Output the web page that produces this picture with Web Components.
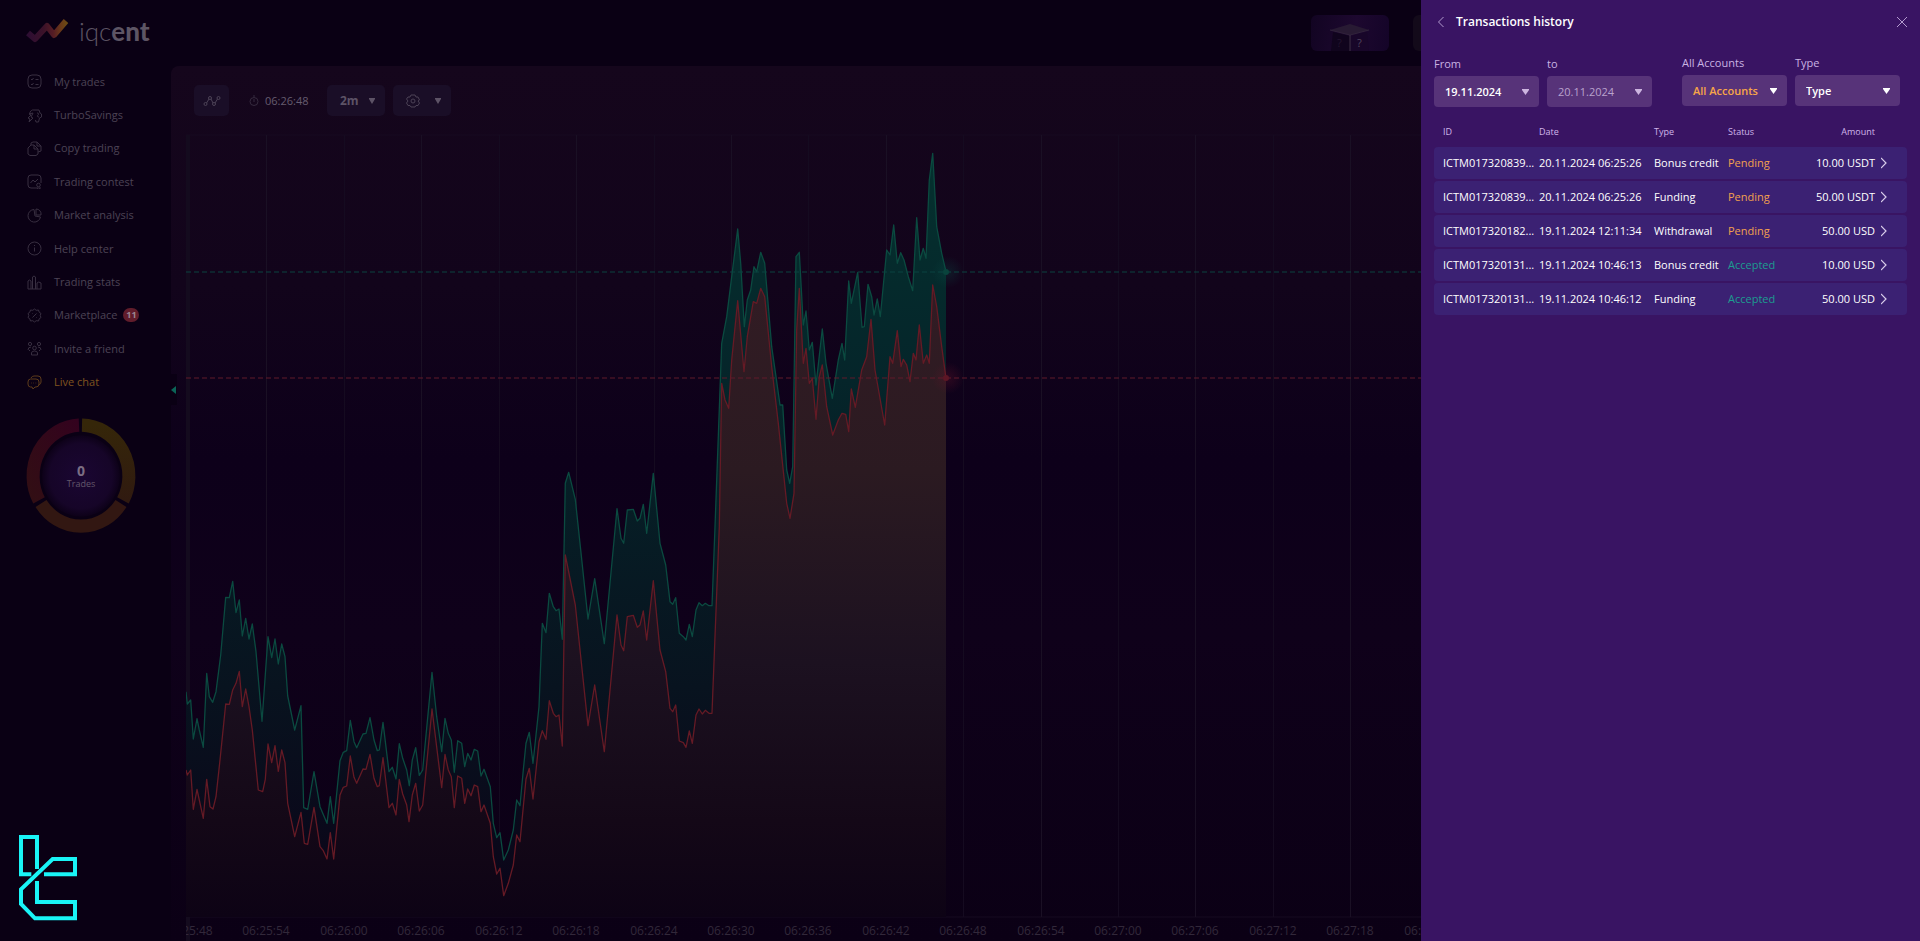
<!DOCTYPE html>
<html lang="en">
<head>
<meta charset="utf-8">
<title>iqcent – Transactions history</title>
<style>
html, body { margin: 0; min-height: 100vh; background: #0a0014; }
body { font: 500 11px/16px "Open Sans", "Noto Sans", sans-serif; color: #4c4354; overflow: hidden; }
</style>
</head>
<body>
<trade-app></trade-app>

<script>
const define = (name, html, setup) => {
  const tpl = document.createElement('template');
  tpl.innerHTML = html;
  customElements.define(name, class extends HTMLElement {
    constructor() {
      super();
      this.attachShadow({ mode: 'open' }).append(tpl.content.cloneNode(true));
    }
    connectedCallback() { if (setup) setup(this, this.shadowRoot); }
  });
};

define('brand-logo', `
<style>
:host { display: block; }
a { display: flex; align-items: center; gap: 9px; color: #5d5564; text-decoration: none; font: 300 26px/32px Lato, sans-serif; }
svg { width: 44px; height: 26px; }
b { font-weight: 900; } i { font-style: normal; font-weight: 700; }
</style>
<a href="#"><svg viewBox="0 0 44 26" fill="none" stroke-width="6" stroke-linejoin="round">
<defs><linearGradient id="g" x1="0" x2="44" y1="0" y2="0" gradientUnits="userSpaceOnUse">
<stop offset="0" stop-color="#2c0d34"/><stop offset=".4" stop-color="#3b1229"/><stop offset=".62" stop-color="#551c24"/><stop offset=".8" stop-color="#6a3a18"/><stop offset="1" stop-color="#6c5412"/></linearGradient></defs>
<path d="M2 15 L9 21 L21 8 L28 17 L40 3" stroke="url(#g)"/></svg><span>iqc<i>e</i><b>nt</b></span></a>`);

const ICONS = {
  trades: '<rect x="1" y="1" width="13" height="13" rx="4"/><path d="M4 5l1 1 1.500-2M4 10l1 1 1.500-2M8.500 5.500h3M8.500 10.500h3"/>',
  savings: '<path d="M2.500 6C3 3 5 1.500 7 2h5l1 3 1.500 1v3l-2 1-1 4H9l-.5-2M2 6l2 1-3 3 2 1-1 3 4-4-2-1 2-4zM10 5c2 0 2 1 1 2s-1 2 1 2"/>',
  copy: '<path d="M4 4V2l2-1h4l4 4v5l-3 1M1 7l3-3h3l4 4v5l-2 1.500H3L1 13zM7 4v4h4M10 1v4h4"/>',
  contest: '<path d="M9 14H4a3 3 0 0 1-3-3V4a3 3 0 0 1 3-3h7a3 3 0 0 1 3 3v5M3.500 9l2.500-3 2 2 3-3"/><circle cx="11.500" cy="11" r="1.800"/><path d="M10 13v2l1.500-1 1.500 1v-2"/>',
  analysis: '<path d="M7 1.500a6.300 6.300 0 1 0 6.500 7.500L8 8z"/><path d="M9 1a5 5 0 0 1 5 6H9z"/>',
  help: '<circle cx="7.500" cy="7.500" r="6.500"/><path d="M7.500 6.500v4M7.500 4v1"/>',
  stats: '<path d="M1 14V6q1.500-2 3 0v8M5.500 14V2q1.500-2 3 0v12M10 14V8q1.500-2 4 0v6M1 14h13"/>',
  market: '<path d="M7.500 1l1.700 1.300 2.300-.3.700 2.200 1.800 1.300-.8 2 .8 2-1.800 1.300-.7 2.200-2.300-.3L7.500 14l-1.700-1.300-2.300.3-.7-2.200L1 9.500l.8-2-.8-2 1.800-1.300.7-2.200 2.300.3zM5.500 9.500l4-4M5.500 5.500h.5M9 9.500h.5"/>',
  invite: '<circle cx="3" cy="3" r="1.600"/><circle cx="12" cy="3" r="1.600"/><circle cx="7.500" cy="7" r="1.800"/><path d="M1 9q0-3 3-3M14 9q0-3-3-3M4.500 14v-2q0-2 3-2t3 2v2zM3 10l-1-1M12 10l1-1"/>',
  chat: '<path d="M4 3q1-2 3-2h4q3 0 3 3v3q0 2-2 3M3.500 4h5.500q3 0 3 3v2q0 3-3 3H8l-2 2-1-2H3.500Q1 12 1 9V7q0-3 2.500-3zM4 8h.6M6.300 8h.6M8.600 8h.6"/>',
};
define('nav-item', `
<style>
:host { display: block; min-width: 0; }
a { display: flex; align-items: center; gap: 12px; height: 100%; color: inherit; text-decoration: none; white-space: nowrap; }
svg { width: 15px; height: 15px; fill: none; stroke: currentColor; stroke-width: 1; opacity: .7; }
span { display: flex; align-items: center; gap: 6px; }
</style>
<a href="#"><svg viewBox="0 0 15 15"></svg><span><slot></slot></span></a>`,
(el, root) => { root.querySelector('svg').innerHTML = ICONS[el.getAttribute('icon')]; });

define('count-badge', `
<style>:host { display: block; width: 16px; height: 14px; border-radius: 8px; background: #611c2b; color: #9a8792; font-weight: 700; font-size: 9px; line-height: 14px; text-align: center; }</style>
<slot></slot>`);

define('trades-ring', `
<style>
:host { display: grid; width: 110px; height: 116px; }
svg, div { grid-area: 1 / 1; }
div { align-self: center; text-align: center; color: #63586b; font-size: 9px; line-height: 12px; }
b { display: block; font-size: 14px; line-height: 15px; color: #7b6e83; }
</style>
<svg viewBox="0 0 110 114" preserveAspectRatio="none" width="110" height="116" fill="none">
<defs>
<linearGradient id="y" x1="0" x2="0" y1="0" y2="1"><stop offset="0" stop-color="#352609"/><stop offset="1" stop-color="#301a10"/></linearGradient>
<linearGradient id="r" x1="1" x2="0" y1="0" y2="1"><stop offset="0" stop-color="#33021e"/><stop offset="1" stop-color="#320e14"/></linearGradient>
<radialGradient id="c"><stop offset="0" stop-color="#1a0632"/><stop offset=".8" stop-color="#160528"/><stop offset="1" stop-color="#0d0118"/></radialGradient>
</defs>
<path d="M56 7A48 50 0 0 1 97 81" stroke="url(#y)" stroke-width="13"/>
<path d="M95 84A48 50 0 0 1 15 84" stroke="#321712" stroke-width="13"/>
<path d="M13 81A48 50 0 0 1 53 7" stroke="url(#r)" stroke-width="13"/>
<ellipse cx="55" cy="57" rx="39" ry="40" fill="url(#c)"/>
</svg>
<div><b>0</b>Trades</div>`);

define('side-bar', `
<style>
:host { display: flex; flex-direction: column; padding: 15px 0 0 26px; }
nav { display: grid; grid-auto-rows: 1fr; height: 334px; margin: 8px 0 19px 1px; }
brand-logo { height: 42px; }
.on { color: #80541f; }
</style>
<brand-logo></brand-logo>
<nav>
<nav-item icon="trades">My trades</nav-item>
<nav-item icon="savings">TurboSavings</nav-item>
<nav-item icon="copy">Copy trading</nav-item>
<nav-item icon="contest">Trading contest</nav-item>
<nav-item icon="analysis">Market analysis</nav-item>
<nav-item icon="help">Help center</nav-item>
<nav-item icon="stats">Trading stats</nav-item>
<nav-item icon="market">Marketplace<count-badge>11</count-badge></nav-item>
<nav-item icon="invite">Invite a friend</nav-item>
<nav-item icon="chat" class="on">Live chat</nav-item>
</nav>
<trades-ring></trades-ring>`);

define('top-bar', `
<style>
:host { display: flex; justify-content: flex-end; gap: 24px; height: 66px; padding: 15px 32px 0 0; box-sizing: border-box; }
button { height: 36px; padding: 0; border: 0; border-radius: 6px; }
.promo { width: 78px; background: linear-gradient(100deg, #120422, #1d082f 55%, #140428); }
.account { width: 475px; background: #130a1a; }
svg { display: block; margin: auto; }
text { font: 11px "Open Sans", sans-serif; }
</style>
<button class="promo" aria-label="Mystery box"><svg width="78" height="36" viewBox="0 0 78 36">
<path d="M22 17L39 21V36H20z" fill="#10041d"/><path d="M56 17L39 21V36H58z" fill="#180629"/>
<path d="M19 15L39 9L58 15L39 20z" fill="#281a33"/><path d="M19 15L39 20L58 15" fill="none" stroke="#31233b"/>
<path d="M39 20V36" stroke="#3e3146"/><text x="26" y="32" fill="#24152f">?</text><text x="46" y="32" fill="#53455d">?</text></svg></button>
<button class="account" aria-label="Account"></button>`);

define('tool-button', `
<style>
:host { display: block; }
button { display: flex; align-items: center; justify-content: space-between; width: 100%; height: 31px; box-sizing: border-box; border: 0; border-radius: 5px; background: #1a0e27; color: #5d5366; font: 700 12px/16px "Open Sans", sans-serif; padding: 0 10px 0 13px; }
:host([plain]) button { justify-content: center; padding: 0; }
:host([plain]) .caret { display: none; }
.caret { width: 6px; height: 6px; fill: currentColor; }
</style>
<button><slot></slot><svg class="caret" viewBox="0 0 6 6"><path d="M0 0h6v1L3 6 0 1z"/></svg></button>`,
(el, root) => { const l = el.getAttribute('label'); if (l) root.querySelector('button').setAttribute('aria-label', l); });

define('chart-tools', `
<style>
:host { display: flex; align-items: center; gap: 8px; height: 64px; padding: 5px 0 0 23px; box-sizing: border-box; }
.a { width: 35px; } .b { width: 58px; }
svg { fill: none; stroke: #4c4256; stroke-width: 1; }
time { display: flex; align-items: center; gap: 6px; width: 82px; padding-left: 12px; color: #665c6f; box-sizing: border-box; }
time svg { stroke: #352a3e; }
</style>
<tool-button plain label="Chart type" class="a"><svg width="18" height="12" viewBox="0 0 18 12"><circle cx="2.500" cy="9" r="1.500"/><circle cx="7" cy="3" r="1.500"/><circle cx="11" cy="9" r="1.500"/><circle cx="15.500" cy="3" r="1.500"/><path d="M3.500 8l2.500-4M8 4l2 4M12 8l2.500-4"/></svg></tool-button>
<time><svg width="10" height="12" viewBox="0 0 10 12"><circle cx="5" cy="6.500" r="4"/><path d="M5 4v3M4 1h2"/></svg>06:26:48</time>
<tool-button class="b">2m</tool-button>
<tool-button class="b" label="Settings"><svg width="14" height="14" viewBox="0 0 14 14"><path d="M5 1h4l1 2h2l1.500 3L12 7l1.500 2L12 11.500h-2L9 13H5l-1-1.500H2L.5 9 2 7 .5 5 2 3h2z"/><circle cx="7" cy="7" r="2"/></svg></tool-button>`);

/* Price series: runs of x,y samples in thirds of a unit, each run with its own origin. */
const SERIES = {
  ask: [
    [180, 540, '18,455 22,492 32,480 40,597 51,536 58,570 70,622 80,400 88,470 98,487 108,455 122,345 137,172 148,173 158,124 168,218 178,180 187,288 197,235 207,297 217,252 228,335 246,544 264,290 275,353 285,297 295,372 305,312 315,350 323,468 344,570 363,497 371,803 383,808 402,695 420,800 441,850 451,770 461,850 480,662 490,637 500,632 511,541 522,605 530,623 549,582 558,580 570,533 582,600 592,632 598,630 609,547 627,695 637,682 648,717 658,611 668,655 680,690 688,737 697,660 707,623 718,706 728,690 756,397 770,530 785,635 795,535 805,580 814,600 823,697 833,602 845,610 854,680 863,640 873,660 883,628 893,633 903,708 912,688 931,740 940,850 950,893 960,878 971,960 985,930 1000,870 1010,780 1020,797 1030,690 1038,610 1048,577 1059,670 1077,500 1087,250 1098,278 1108,160 1120,200 1128,212 1137,207'],
    [500, 440, '187,598 196,130 206,97 226,178 240,310 264,537 284,416 313,611 351,206 363,295 371,310 382,210 400,208 412,243 420,235 430,193 440,280 460,100 480,310 497,375 510,485 518,493 527,473 538,580 550,590 558,600 568,553 577,590 588,510 597,488 607,497 616,490 627,497 636,497'],
    [690, 130, '75,1190 95,640 110,560 125,440 143,297 152,400 163,590 172,510 182,480 192,410 200,425 212,367 224,400 245,650 258,740 270,825 278,825 290,1020 299,1060 308,1010 318,380 328,367 340,585 348,543 358,660 367,637 378,765 397,597 408,700 427,805 445,690 456,640 464,690 476,453 484,520 503,427 516,592 523,590 534,463 545,500 552,555 562,507 571,560 590,360 600,375 611,285 622,400 632,368 642,390 655,440 668,482 680,263 690,390 700,355 708,385 718,150 728,70 740,290 755,370 768,425'],
  ],
  bid: [
    [180, 540, '18,690 22,705 32,690 40,808 51,748 58,780 70,835 80,718 90,800 99,807 108,770 120,660 137,492 148,493 158,450 168,430 178,394 187,500 197,447 207,500 217,570 235,750 248,755 256,718 264,612 275,668 285,617 295,694 305,630 315,668 323,790 344,890 363,817 373,910 383,913 402,802 420,920 430,932 441,957 451,878 461,957 480,765 490,742 500,738 511,648 522,712 530,730 549,687 558,688 570,643 582,715 592,740 598,737 609,653 627,803 637,790 648,825 658,718 668,762 680,795 687,845 697,765 707,730 718,813 728,795 756,507 785,743 795,643 805,690 814,710 823,803 833,708 845,715 854,790 863,747 873,767 883,735 893,740 903,815 912,795 931,850 940,950 950,1002 960,985 971,1067 985,1030 1000,975 1010,885 1020,905 1030,800 1038,717 1048,685 1059,777 1077,605 1087,572 1098,598 1108,482 1120,520 1128,530 1137,525'],
    [500, 440, '187,918 196,345 226,495 264,857 284,735 313,935 351,525 363,615 371,632 382,530 400,526 412,562 420,555 430,513 440,600 460,422 480,630 497,695 510,805 518,815 527,795 538,903 550,908 558,922 568,873 577,910 588,825 597,807 607,822 616,811 627,820 636,820'],
    [690, 130, '88,1190 95,760 105,810 116,835 125,690 143,512 162,725 172,620 190,515 200,520 212,475 224,500 245,710 265,880 290,1120 300,1165 312,1090 320,600 328,475 340,700 348,655 358,760 367,745 378,868 388,740 397,705 410,830 428,915 445,870 456,850 467,853 476,905 484,777 496,832 515,720 530,680 543,568 555,720 584,885 600,680 608,700 622,602 633,710 640,688 650,705 660,755 670,670 678,690 688,585 700,700 710,675 718,700 728,465 740,530 755,650 768,745'],
  ],
};
const linePath = runs => 'M' + runs.flatMap(([ox, oy, pts]) => pts.split(' ').map(p => {
  const [x, y] = p.split(',');
  return (ox + x / 3).toFixed(1) + ' ' + (oy + y / 3).toFixed(1);
})).join('L');

define('price-chart', `
<style>
:host { display: block; margin-left: 15px; }
svg { display: block; width: 100%; height: auto; }
text { font: 12px "Open Sans", sans-serif; fill: #32283a; text-anchor: middle; }
.line { fill: none; stroke-width: 1.3; stroke-linejoin: round; }
</style>
<svg viewBox="186 130 1734 811">
<defs>
<linearGradient id="ask" gradientUnits="userSpaceOnUse" x1="0" x2="0" y1="150" y2="917"><stop offset="0" stop-color="#05312f"/><stop offset=".3" stop-color="#05252a"/><stop offset=".7" stop-color="#08131f"/><stop offset="1" stop-color="#0b0318"/></linearGradient>
<linearGradient id="bid" gradientUnits="userSpaceOnUse" x1="0" x2="0" y1="280" y2="917"><stop offset="0" stop-color="#321c24"/><stop offset=".3" stop-color="#2b1a21"/><stop offset=".6" stop-color="#1c1120"/><stop offset=".85" stop-color="#140817"/><stop offset="1" stop-color="#0d0315"/></linearGradient>
<radialGradient id="ga"><stop offset="0" stop-color="#0a5048" stop-opacity=".3"/><stop offset="1" stop-color="#0a5048" stop-opacity="0"/></radialGradient>
<radialGradient id="gb"><stop offset="0" stop-color="#66142a" stop-opacity=".35"/><stop offset="1" stop-color="#66142a" stop-opacity="0"/></radialGradient>
</defs>
<g class="grid" stroke="#1a1024"><path d="M186 135H1920M186 917H1920" stroke="#160b20"/><path d="M188 135V941" stroke="#140b1e" stroke-width="4"/></g>
<path class="fa" fill="url(#ask)"/><path class="fb" fill="url(#bid)"/>
<path class="line la" stroke="#0b4a40"/><path class="line lb" stroke="#651a25"/>
<path d="M186 272H1920" stroke="#0b4240" stroke-dasharray="5 3"/>
<path d="M186 378H1920" stroke="#601a2a" stroke-dasharray="5 3"/>
<circle cx="948" cy="272" r="16" fill="url(#ga)"/><circle cx="946" cy="272" r="3" fill="#09433c"/>
<circle cx="948" cy="378" r="16" fill="url(#gb)"/><circle cx="946" cy="378" r="3" fill="#5c1625"/>
<g class="times"></g>
</svg>`,
(el, root) => {
  const $ = s => root.querySelector(s);
  const ns = 'http://www.w3.org/2000/svg';
  for (const [k, key] of [['a', 'ask'], ['b', 'bid']]) {
    const d = linePath(SERIES[key]);
    $('.l' + k).setAttribute('d', d);
    $('.f' + k).setAttribute('d', d + 'V917H186Z');
  }
  const start = 6 * 3600 + 25 * 60 + 48;
  for (let i = 0; i <= 16; i++) {
    const x = Math.round(189 + i * 77.42), t = start + i * 6;
    if (i) {
      const p = document.createElementNS(ns, 'path');
      p.setAttribute('d', `M${x}.5 135V917`);
      if (i % 2 === 0) p.setAttribute('stroke', '#150b20');
      $('.grid').append(p);
    }
    const label = document.createElementNS(ns, 'text');
    label.setAttribute('x', x); label.setAttribute('y', 935);
    label.textContent = [t / 3600, t / 60 % 60, t % 60].map(n => String(Math.floor(n)).padStart(2, '0')).join(':');
    $('.times').append(label);
  }
});

define('chart-panel', `
<style>
:host { display: block; position: relative; border-radius: 8px 0 0 0; background: linear-gradient(#15061c, #12041b 25%, #0d001a 45%, #0f011a 65%, #0b0015); }
button { position: absolute; left: 0; top: 308px; width: 6px; height: 31px; padding: 0; border: 0; background: #0a0014; }
svg { display: block; }
</style>
<chart-tools></chart-tools><price-chart></price-chart>
<button aria-label="Collapse menu"><svg width="5" height="8" viewBox="0 0 5 8"><path d="M5 0v8L0 4z" fill="#0b6458"/></svg></button>`);

define('select-field', `
<style>
:host { display: block; }
label { display: block; color: #c9b3e2; line-height: 16px; margin-bottom: 4px; }
div { display: grid; align-items: center; }
select, svg { grid-area: 1 / 1; }
select { appearance: none; width: 100%; height: 31px; margin: 0; padding: 0 24px 0 11px; border: 0; border-radius: 4px; background: #573379; color: var(--value, #fff); font: 600 11px/16px "Open Sans", sans-serif; }
:host([quiet]) select { font-weight: 400; }
svg { justify-self: end; width: 7px; height: 6px; margin-right: 10px; fill: var(--caret, #fff); pointer-events: none; }
</style>
<label for="f"></label>
<div><select id="f"><option></option></select><svg viewBox="0 0 7 6"><path d="M0 0h7v1L3.500 6 0 1z"/></svg></div>`,
(el, root) => {
  root.querySelector('label').textContent = el.getAttribute('label');
  root.querySelector('option').textContent = el.getAttribute('value');
});

define('transactions-table', `
<style>
:host { display: block; }
table { width: 100%; table-layout: fixed; border-spacing: 0 2px; }
th { height: 26px; padding: 0; text-align: left; font-weight: 400; font-size: 9px; color: #d0b6ea; }
td { height: 32px; padding: 0; background: #3b2173; color: #fff; white-space: nowrap; }
th:first-child, td:first-child { padding-left: 9px; }
td:first-child { border-radius: 4px 0 0 4px; } td:last-child { border-radius: 0 4px 4px 0; }
.amount { text-align: right; }
.pending { color: #f2a04e; font-weight: 400; } .accepted { color: #1b9d90; font-weight: 400; }
button { display: block; margin: 0 0 0 6px; padding: 0; border: 0; background: none; }
svg { display: block; fill: none; stroke: #d9cdea; stroke-width: 1.2; }
</style>
<table>
<colgroup><col style="width:105px"><col style="width:115px"><col style="width:74px"><col style="width:59px"><col><col style="width:32px"></colgroup>
<thead><tr><th>ID</th><th>Date</th><th>Type</th><th>Status</th><th class="amount">Amount</th><th></th></tr></thead>
<tbody></tbody></table>`,
(el, root) => {
  root.querySelector('tbody').innerHTML = [
    ['ICTM017320839...', '20.11.2024 06:25:26', 'Bonus credit', 'Pending', '10.00 USDT'],
    ['ICTM017320839...', '20.11.2024 06:25:26', 'Funding', 'Pending', '50.00 USDT'],
    ['ICTM017320182...', '19.11.2024 12:11:34', 'Withdrawal', 'Pending', '50.00 USD'],
    ['ICTM017320131...', '19.11.2024 10:46:13', 'Bonus credit', 'Accepted', '10.00 USD'],
    ['ICTM017320131...', '19.11.2024 10:46:12', 'Funding', 'Accepted', '50.00 USD'],
  ].map(([id, date, type, status, amount]) => `<tr><td>${id}</td><td>${date}</td><td>${type}</td><td class="${status.toLowerCase()}">${status}</td><td class="amount">${amount}</td><td><button aria-label="Details"><svg width="6" height="12" viewBox="0 0 6 12"><path d="M0 1l5 5-5 5"/></svg></button></td></tr>`).join('');
});

define('history-drawer', `
<style>
:host { display: block; box-sizing: border-box; width: 499px; height: 100vh; padding: 12px 13px 0; background: #391463; }
header { display: flex; align-items: center; gap: 12px; height: 20px; padding-left: 4px; color: #fff; }
h1 { flex: 1; margin: 0; font-size: 12px; font-weight: 600; line-height: 20px; }
header button { padding: 0; border: 0; background: none; }
svg { display: block; fill: none; stroke: #b39bcf; stroke-width: 1; }
form { display: grid; grid-template-columns: 105px 105px 1fr 105px 105px; column-gap: 8px; margin: 23px 7px 10px 0; }
.account { grid-column: 4; --value: #f7a648; }
.dates { padding-top: 1px; --caret: #cdb5e0; }
.to { --value: #b9a2cd; }
</style>
<header><button aria-label="Back"><svg width="6" height="12" viewBox="0 0 6 12"><path d="M5.500 1l-5 5 5 5"/></svg></button>
<h1>Transactions history</h1>
<button aria-label="Close"><svg width="10" height="12" viewBox="0 0 10 12"><path d="M0 1l10 10M10 1L0 11"/></svg></button></header>
<form>
<select-field class="dates" label="From" value="19.11.2024"></select-field>
<select-field class="dates to" quiet label="to" value="20.11.2024"></select-field>
<select-field class="account" label="All Accounts" value="All Accounts"></select-field>
<select-field label="Type" value="Type"></select-field>
</form>
<transactions-table></transactions-table>`);

define('corner-mark', `
<style>:host { display: block; } svg { display: block; }</style>
<svg width="60" height="86" viewBox="57 45 180 258" fill="none" stroke="#19f4f6" stroke-width="12">
<path d="M111 147V51H63V163H94"/><path d="M132 163H225V117H158L63 208V252L105 295H225V246H111V183"/></svg>`);

define('trade-app', `
<style>
:host { display: grid; grid-template-columns: 171px minmax(0, 1fr); min-height: 100vh; }
history-drawer { position: fixed; top: 0; right: 0; }
corner-mark { position: fixed; left: 19px; bottom: 20px; }
main { display: flex; flex-direction: column; }
chart-panel { flex: 1; }
</style>
<side-bar></side-bar>
<main><top-bar></top-bar><chart-panel></chart-panel></main>
<corner-mark></corner-mark>
<history-drawer></history-drawer>`);
</script>
</body>
</html>
